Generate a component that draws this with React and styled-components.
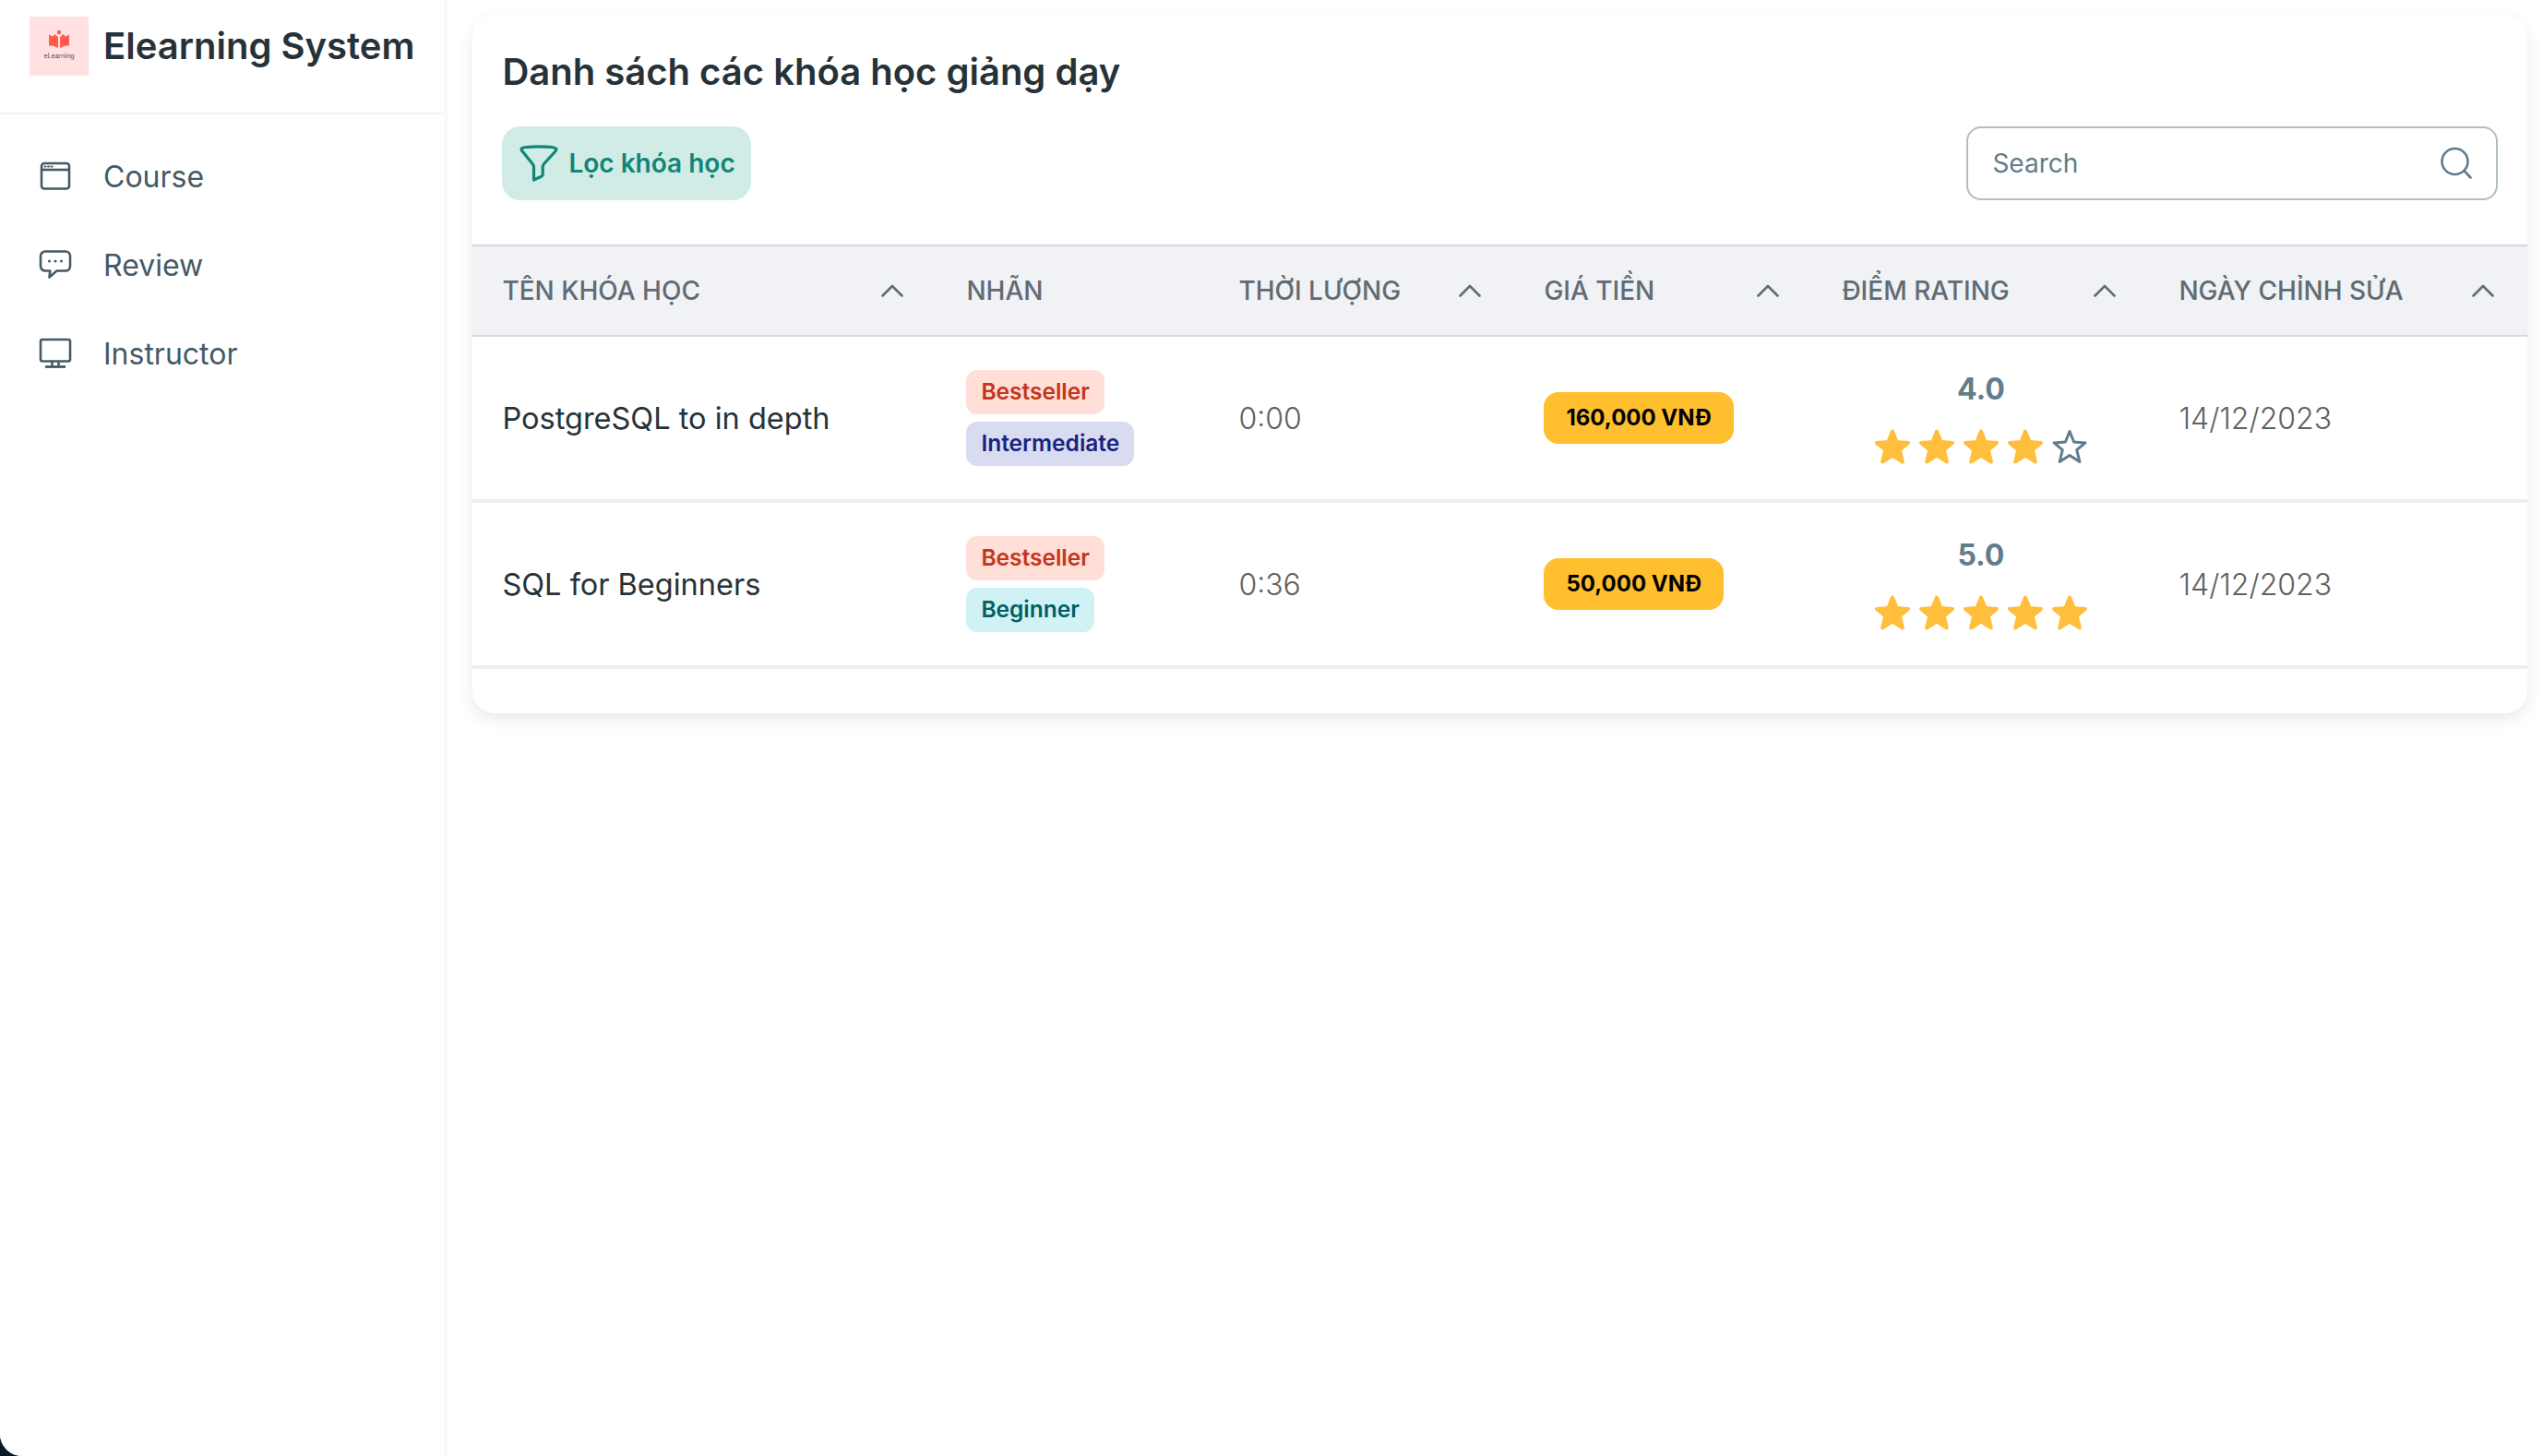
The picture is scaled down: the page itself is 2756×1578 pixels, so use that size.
import styled, { createGlobalStyle } from "styled-components";

const GlobalStyle = createGlobalStyle`
  * { box-sizing: border-box; }
  html, body { margin: 0; padding: 0; background: #0b1a2b; }
  body { font-family: Inter, "Liberation Sans", sans-serif; }
`;

const courses = [
  {
    name: "PostgreSQL to in depth",
    tags: [
      { label: "Bestseller", kind: "red" },
      { label: "Intermediate", kind: "indigo" },
    ],
    duration: "0:00",
    price: "160,000 VNĐ",
    rating: 4,
    updated: "14/12/2023",
  },
  {
    name: "SQL for Beginners",
    tags: [
      { label: "Bestseller", kind: "red" },
      { label: "Beginner", kind: "teal" },
    ],
    duration: "0:36",
    price: "50,000 VNĐ",
    rating: 5,
    updated: "14/12/2023",
  },
];

const columns = [
  { title: "TÊN KHÓA HỌC", width: 503, sort: true },
  { title: "NHÃN", width: 295 },
  { title: "THỜI LƯỢNG", width: 331, sort: true },
  { title: "GIÁ TIỀN", width: 323, sort: true },
  { title: "ĐIỂM RATING", width: 365, sort: true },
  { title: "NGÀY CHỈNH SỬA", width: 410, sort: true },
];

const tagColors = {
  red: { bg: "#ffdfd8", fg: "#c4361c" },
  indigo: { bg: "#d9dcf0", fg: "#1a237e" },
  teal: { bg: "#d1f2f5", fg: "#006064" },
};

const CourseIcon = () => (
  <svg width="36" height="36" viewBox="0 0 36 36" fill="none" stroke="#455a64" strokeWidth="2.6">
    <rect x="3" y="4" width="30" height="27.5" rx="3" />
    <path d="M3 11h30" />
    <path d="M6.5 7.6h1M10 7.6h1M13.5 7.6h1" strokeWidth="2" strokeLinecap="round" />
  </svg>
);

const ReviewIcon = () => (
  <svg width="36" height="36" viewBox="0 0 36 36" fill="none" stroke="#455a64" strokeWidth="2.6" strokeLinejoin="round">
    <path d="M7 3.5h22a5 5 0 0 1 5 5v11a5 5 0 0 1-5 5H19.5l-8 7 .8-7H7a5 5 0 0 1-5-5v-11a5 5 0 0 1 5-5z" />
    <circle cx="11.5" cy="14" r="1.5" fill="#455a64" stroke="none" />
    <circle cx="18" cy="14" r="1.5" fill="#455a64" stroke="none" />
    <circle cx="24.5" cy="14" r="1.5" fill="#455a64" stroke="none" />
  </svg>
);

const MonitorIcon = () => (
  <svg width="36" height="36" viewBox="0 0 36 36" fill="none" stroke="#455a64" strokeWidth="2.6">
    <rect x="2" y="3" width="32" height="23.5" rx="2" />
    <path d="M14.5 26.5v5M21.5 26.5v5" />
    <path d="M7 32.5h22" strokeWidth="2.8" />
  </svg>
);

const FilterIcon = () => (
  <svg width="44" height="44" viewBox="0 0 44 44" fill="none" stroke="#128577" strokeWidth="3.2" strokeLinejoin="round" strokeLinecap="round">
    <path d="M3 6.5c0-1.700 8-2.700 19-2.700s19 1 19 2.700c0 1.200-1 2.400-2 3.500L28 22c-1.300 1.400-1.800 2.600-1.800 4.200v7.800c0 1-.5 1.700-1.500 2.200L16.500 40V26.200c0-1.600-.6-2.800-1.800-4.200L5 10c-1-1.100-2-2.300-2-3.500z" />
  </svg>
);

const SearchIcon = () => (
  <svg width="38" height="38" viewBox="0 0 38 38" fill="none" stroke="#5f7d8c" strokeWidth="2.6" strokeLinecap="round">
    <circle cx="17.500" cy="17" r="14" />
    <path d="M27.500 27l7 7.500" />
  </svg>
);

const ChevronUp = () => (
  <svg width="24" height="14" viewBox="0 0 24 14" fill="none" stroke="#616b73" strokeWidth="2.6" strokeLinecap="round" strokeLinejoin="round">
    <path d="M1.500 12.500L12 2l10.500 10.500" />
  </svg>
);

const StarIcon = ({ filled }) => (
  <svg width="40" height="40" viewBox="0 0 40 40">
    <path
      d="M20 3.500l4.600 11.500 12.400.900-9.300 7.700 3.200 12.900L20 29.500 9.100 36.500l3.200-12.900L3 15.900l12.400-.9z"
      fill={filled ? "#ffbf3d" : "none"}
      stroke={filled ? "#ffbf3d" : "#5f7d8c"}
      strokeWidth={filled ? 4 : 3}
      strokeLinejoin="round"
    />
  </svg>
);

const BrandMark = () => (
  <LogoBox>
    <svg width="22" height="22" viewBox="0 0 22 22">
      <circle cx="11" cy="3" r="2.200" fill="#ff5a4d" />
      <path d="M0 5.500l4 2 2.500-2.500 3.500 3.500V20L4 17.500H0z" fill="#ff5a4d" />
      <path d="M22 5.500l-4 2-2.500-2.500L12 8.500V20l6-2.500h4z" fill="#ff5a4d" />
    </svg>
    <LogoText>eLearning</LogoText>
  </LogoBox>
);

const App = () => {
  return (
    <>
      <GlobalStyle />
      <Page>
        <Sidebar>
          <Brand>
            <BrandMark />
            <BrandName>Elearning System</BrandName>
          </Brand>
          <Nav>
            <NavItem>
              <CourseIcon />
              <span>Course</span>
            </NavItem>
            <NavItem>
              <ReviewIcon />
              <span>Review</span>
            </NavItem>
            <NavItem>
              <MonitorIcon />
              <span>Instructor</span>
            </NavItem>
          </Nav>
        </Sidebar>
        <Main>
          <Card>
            <CardHead>
              <Title>Danh sách các khóa học giảng dạy</Title>
              <Toolbar>
                <FilterButton>
                  <FilterIcon />
                  Lọc khóa học
                </FilterButton>
                <SearchBox>
                  <SearchText>Search</SearchText>
                  <SearchIcon />
                </SearchBox>
              </Toolbar>
            </CardHead>
            <Table>
              <colgroup>
                {columns.map((col) => (
                  <col key={col.title} style={{ width: col.width }} />
                ))}
              </colgroup>
              <thead>
                <tr>
                  {columns.map((col) => (
                    <Th key={col.title}>
                      <ThInner>
                        {col.title}
                        {col.sort && <ChevronUp />}
                      </ThInner>
                    </Th>
                  ))}
                </tr>
              </thead>
              <tbody>
                {courses.map((course) => (
                  <tr key={course.name}>
                    <NameCell>{course.name}</NameCell>
                    <Td>
                      <Tags>
                        {course.tags.map((tag) => (
                          <Tag key={tag.label} $kind={tag.kind}>
                            {tag.label}
                          </Tag>
                        ))}
                      </Tags>
                    </Td>
                    <MutedCell>{course.duration}</MutedCell>
                    <Td>
                      <Price>{course.price}</Price>
                    </Td>
                    <Td>
                      <Rating>
                        <RatingValue>{course.rating.toFixed(1)}</RatingValue>
                        <Stars>
                          {[1, 2, 3, 4, 5].map((n) => (
                            <StarIcon key={n} filled={n <= course.rating} />
                          ))}
                        </Stars>
                      </Rating>
                    </Td>
                    <MutedCell>{course.updated}</MutedCell>
                  </tr>
                ))}
              </tbody>
            </Table>
            <CardFoot />
          </Card>
        </Main>
      </Page>
    </>
  );
};

const Page = styled.div`
  display: flex;
  height: 100vh;
  overflow: hidden;
  background: #fff;
  border-bottom-left-radius: 24px;
`;

const Sidebar = styled.aside`
  flex: 0 0 482px;
  background: #fff;
  border-right: 4px solid #f8f9fa;
`;

const Brand = styled.div`
  display: flex;
  gap: 16px;
  height: 124px;
  padding: 18px 32px 0;
  border-bottom: 2px solid #f0f2f5;
`;

const LogoBox = styled.div`
  flex: 0 0 64px;
  height: 64px;
  background: #ffe1e1;
  display: flex;
  flex-direction: column;
  align-items: center;
  padding-top: 14px;
`;

const LogoText = styled.span`
  font-size: 7px;
  line-height: 9px;
  margin-top: 2px;
  color: #5a4a4f;
  white-space: nowrap;
`;

const BrandName = styled.div`
  font-size: 40px;
  font-weight: 600;
  line-height: 64px;
  color: #263238;
  white-space: nowrap;
`;

const Nav = styled.nav`
  display: flex;
  flex-direction: column;
  padding-top: 19px;
`;

const NavItem = styled.div`
  display: flex;
  align-items: center;
  gap: 34px;
  height: 96px;
  padding-left: 42px;
  font-size: 32px;
  color: #455a64;
`;

const Main = styled.main`
  flex: 1;
  padding: 16px 20px 0 27px;
`;

const Card = styled.section`
  background: #fff;
  border-radius: 24px;
  box-shadow: 0 6px 16px rgba(60, 70, 80, 0.12);
`;

const CardHead = styled.div`
  padding: 34px 32px 48px;
`;

const Title = styled.h2`
  margin: 0 0 31px;
  font-size: 40px;
  line-height: 56px;
  font-weight: 600;
  color: #263238;
`;

const Toolbar = styled.div`
  display: flex;
  justify-content: space-between;
  align-items: center;
`;

const FilterButton = styled.button`
  display: flex;
  align-items: center;
  gap: 10px;
  width: 270px;
  height: 80px;
  padding: 0 0 0 18px;
  border: 0;
  border-radius: 20px;
  background: #d1ebe7;
  color: #128577;
  font: 600 28px Inter, sans-serif;
`;

const SearchBox = styled.div`
  display: flex;
  align-items: center;
  justify-content: space-between;
  width: 576px;
  height: 80px;
  padding: 0 24px 0 26px;
  border: 2px solid #b0bec5;
  border-radius: 16px;
`;

const SearchText = styled.span`
  font-size: 28px;
  color: #5f7d8c;
`;

const Table = styled.table`
  width: 100%;
  table-layout: fixed;
  border-collapse: separate;
  border-spacing: 0;
`;

const Th = styled.th`
  height: 100px;
  padding: 0 32px;
  background: #f0f2f5;
  border-top: 2px solid #d3dae0;
  border-bottom: 2px solid #d3dae0;
  text-align: left;
  font-size: 28px;
  font-weight: 500;
  color: #616b73;
  white-space: nowrap;
`;

const ThInner = styled.div`
  display: flex;
  align-items: center;
  justify-content: space-between;
  margin-right: 4px;
`;

const Td = styled.td`
  height: 180px;
  padding: 0 32px;
  border-bottom: 4px solid #eeeeee;
  vertical-align: middle;
`;

const NameCell = styled(Td)`
  font-size: 32.5px;
  color: #263238;
`;

const MutedCell = styled(Td)`
  font-size: 32px;
  font-weight: 300;
  color: #616161;
`;

const Tags = styled.div`
  display: flex;
  flex-direction: column;
  align-items: flex-start;
  gap: 8px;
`;

const Tag = styled.span`
  height: 48px;
  padding: 0 16px;
  border-radius: 12px;
  font-size: 24.5px;
  font-weight: 600;
  line-height: 47px;
  white-space: nowrap;
  background: ${(p) => tagColors[p.$kind].bg};
  color: ${(p) => tagColors[p.$kind].fg};
`;

const Price = styled.span`
  display: inline-block;
  height: 56px;
  padding: 0 24px;
  border-radius: 16px;
  background: #ffbf2f;
  color: #000;
  font-size: 24px;
  font-weight: 700;
  line-height: 56px;
  white-space: nowrap;
`;

const Rating = styled.div`
  display: flex;
  flex-direction: column;
  align-items: center;
  width: 301px;
`;

const RatingValue = styled.div`
  font-size: 32px;
  font-weight: 700;
  line-height: 40px;
  color: #607d8b;
`;

const Stars = styled.div`
  display: flex;
  gap: 8px;
  margin-top: 22px;
`;

const CardFoot = styled.div`
  height: 48px;
`;

export default App;
